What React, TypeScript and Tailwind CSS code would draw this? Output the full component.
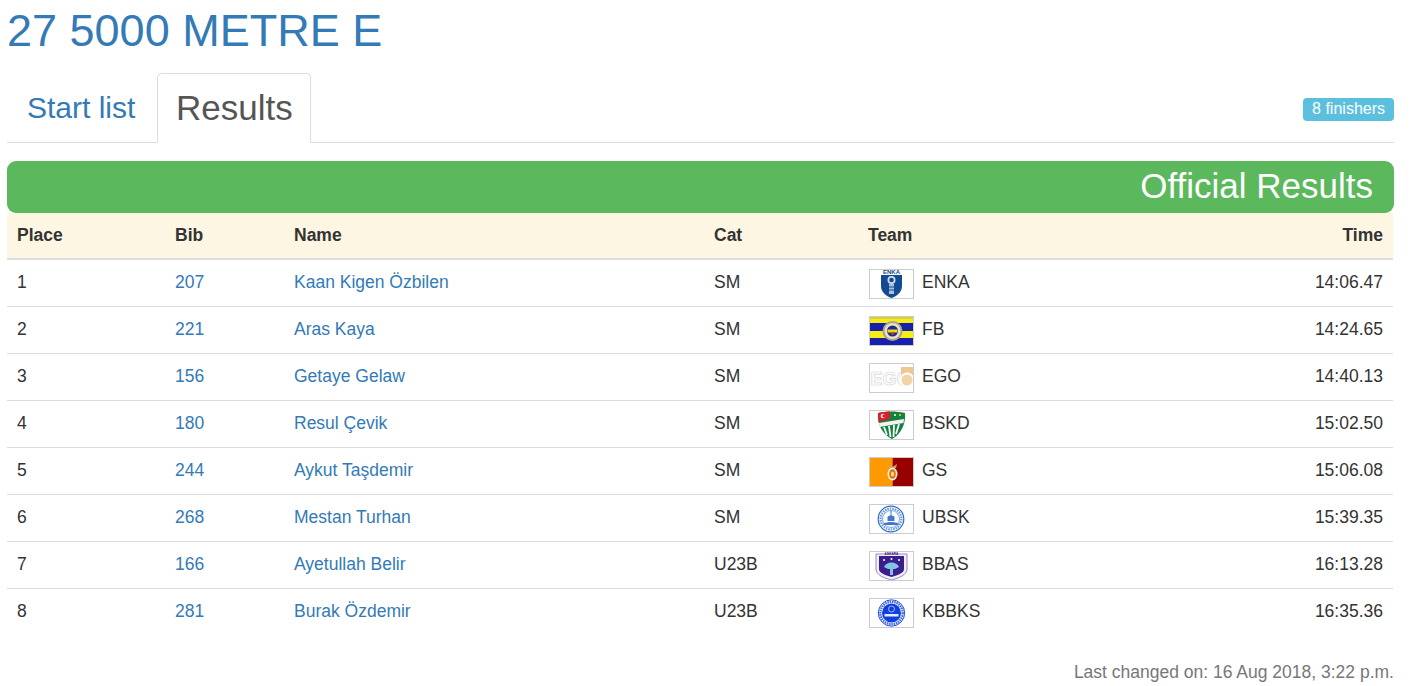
import React from 'react';

const Enka = () => (
  <svg viewBox="0 0 43 28" className="block w-full h-full">
    <rect width="43" height="28" fill="#fff" />
    <text x="21.500" y="4.200" textAnchor="middle" fontSize="6" fontWeight="700" fill="#1c4a8c" fontFamily="Liberation Sans">ENKA</text>
    <path d="M11 5h21v11c0 6-5 10-10.500 12C16 26 11 22 11 16z" fill="#134a94" />
    <circle cx="21.500" cy="10" r="4" fill="#d5e0ee" />
    <circle cx="21.500" cy="10" r="2.300" fill="#134a94" />
    <rect x="19" y="14" width="5" height="10" fill="#a9bfdb" />
    <path d="M19 17h5M19 20h5" stroke="#134a94" strokeWidth="1" />
  </svg>
);

const Fb = () => (
  <svg viewBox="0 0 43 28" className="block w-full h-full">
    <rect width="43" height="28" fill="#f7ec13" />
    <rect y="6" width="43" height="8" fill="#1620a8" />
    <rect y="21" width="43" height="7" fill="#1620a8" />
    <rect y="0" width="43" height="2" fill="#d8cf3a" />
    <circle cx="22.500" cy="14" r="10" fill="#a8a490" />
    <circle cx="22.500" cy="14" r="8" fill="#e8e2c8" />
    <circle cx="22.500" cy="14" r="5.500" fill="#1a2b8c" />
    <path d="M17.500 12.500h10v3h-10z" fill="#f2d90e" />
    <circle cx="22.500" cy="16.500" r="1.600" fill="#c63a22" />
  </svg>
);

const Ego = () => (
  <svg viewBox="0 0 43 28" className="block w-full h-full">
    <rect width="43" height="28" fill="#fff" />
    <text x="0.500" y="21" fontSize="18" fontWeight="700" fill="#fff" stroke="#d6d6d6" strokeWidth="0.700" fontFamily="Liberation Sans">EGO</text>
    <path d="M31 3h12v9h-12z" fill="#eec795" />
    <circle cx="37" cy="16" r="6.500" fill="#f2d3a6" stroke="#fff" strokeWidth="2" />
  </svg>
);

const Bskd = () => (
  <svg viewBox="0 0 43 28" className="block w-full h-full">
    <rect width="43" height="28" fill="#fff" />
    <path d="M8 2c8-2 18-2 27 0 1 11-4 21-13 26C12 23 7 13 8 2z" fill="#14813f" />
    <path d="M8 2c4-1 8-1.500 12-1.500V8L8.500 11z" fill="#d81f2a" />
    <path d="M9 12l25-4-.5 4-24 4z" fill="#f3f3f3" />
    <path d="M14 16l3 8M19 15l1.500 11M24 14l-.5 12M29 13l-3 10" stroke="#fff" strokeWidth="1.800" />
    <circle cx="13" cy="5" r="2.300" fill="#fff" />
    <circle cx="14" cy="5" r="1.800" fill="#d81f2a" />
    <circle cx="25" cy="4" r="1" fill="#fff" />
    <circle cx="30" cy="4" r="1" fill="#f2d90e" />
  </svg>
);

const Gs = () => (
  <svg viewBox="0 0 43 28" className="block w-full h-full">
    <rect width="22.500" height="28" fill="#fd9a00" />
    <rect x="22.500" width="20.500" height="28" fill="#990000" />
    <path d="M18 6l4.500 3 4.500-3-1 4h-7z" fill="#c9a65a" />
    <ellipse cx="22.500" cy="16" rx="5" ry="6.500" fill="#f6f2e4" />
    <ellipse cx="22.500" cy="16" rx="3.300" ry="4.800" fill="#e0730f" />
    <ellipse cx="22.500" cy="16" rx="1.500" ry="2.500" fill="#f6df9a" />
  </svg>
);

const Ubsk = () => (
  <svg viewBox="0 0 43 28" className="block w-full h-full">
    <rect width="43" height="28" fill="#fff" />
    <circle cx="21" cy="14" r="12.800" fill="#fff" stroke="#2f6fc4" strokeWidth="1.200" />
    <circle cx="21" cy="14" r="10.400" fill="none" stroke="#6f9ada" strokeWidth="2.400" strokeDasharray="1.500 1" />
    <circle cx="21" cy="14" r="8.500" fill="#fff" stroke="#2f6fc4" strokeWidth="0.600" />
    <path d="M20.500 5.500h1v5h-1zM17.500 12c1-2 6-2 7 0v4h-7zM13.500 18.500c4-2 11-2 15 0v1.500h-15z" fill="#3d7ad0" />
  </svg>
);

const Bbas = () => (
  <svg viewBox="0 0 43 28" className="block w-full h-full">
    <rect width="43" height="28" fill="#fff" />
    <path d="M6 2h31v15c0 6-8 9-15.500 11C14 26 6 23 6 17z" fill="#f3effa" stroke="#9a86c0" strokeWidth="1" />
    <text x="21.500" y="2.600" textAnchor="middle" fontSize="3.200" fontWeight="700" fill="#3a2080" fontFamily="Liberation Sans">ANKARA</text>
    <path d="M9 4h25v13c0 4-6 6-12.500 8C15 23 9 21 9 17z" fill="#3c1d8c" />
    <path d="M14 15c2-6 13-6 15 0l-4 2h-2v6h-3v-6h-2z" fill="#7fc4e2" />
    <circle cx="14" cy="8" r="1" fill="#fff" />
    <circle cx="21.500" cy="7" r="1" fill="#fff" />
    <circle cx="29" cy="8" r="1" fill="#fff" />
  </svg>
);

const Kbbks = () => (
  <svg viewBox="0 0 43 28" className="block w-full h-full">
    <rect width="43" height="28" fill="#fff" />
    <circle cx="21.500" cy="14" r="13.200" fill="#fff" stroke="#1d4fd8" strokeWidth="1" />
    <circle cx="21.500" cy="14" r="11.200" fill="none" stroke="#3f6ae4" strokeWidth="2.400" strokeDasharray="1.500 0.800" />
    <circle cx="21.500" cy="14" r="9.500" fill="#0f3fe0" />
    <circle cx="21.500" cy="10" r="3" fill="none" stroke="#c8d6ff" strokeWidth="0.800" />
    <rect x="14.500" y="15" width="14" height="2.500" fill="#e6ecff" />
  </svg>
);

const rows = [
  { place: 1, bib: 207, name: 'Kaan Kigen Özbilen', cat: 'SM', team: 'ENKA', Logo: Enka, time: '14:06.47' },
  { place: 2, bib: 221, name: 'Aras Kaya', cat: 'SM', team: 'FB', Logo: Fb, time: '14:24.65' },
  { place: 3, bib: 156, name: 'Getaye Gelaw', cat: 'SM', team: 'EGO', Logo: Ego, time: '14:40.13' },
  { place: 4, bib: 180, name: 'Resul Çevik', cat: 'SM', team: 'BSKD', Logo: Bskd, time: '15:02.50' },
  { place: 5, bib: 244, name: 'Aykut Taşdemir', cat: 'SM', team: 'GS', Logo: Gs, time: '15:06.08' },
  { place: 6, bib: 268, name: 'Mestan Turhan', cat: 'SM', team: 'UBSK', Logo: Ubsk, time: '15:39.35' },
  { place: 7, bib: 166, name: 'Ayetullah Belir', cat: 'U23B', team: 'BBAS', Logo: Bbas, time: '16:13.28' },
  { place: 8, bib: 281, name: 'Burak Özdemir', cat: 'U23B', team: 'KBBKS', Logo: Kbbks, time: '16:35.36' },
];

export default function App() {
  return (
    <div className="h-[686px] overflow-hidden bg-white pl-[7px] pr-5 font-['Liberation_Sans',Arial,sans-serif] text-[17.5px] leading-[25px] text-[#333]">
      <h1 className="pt-[6px] text-[45px] leading-[50px] text-[#337ab7]">27 5000 METRE E</h1>

      {/* Tabs */}
      <div className="mt-[17px] flex h-[70px] items-stretch border-b border-[#ddd]">
        <a className="mr-[3px] flex h-[70px] w-[147px] items-center whitespace-nowrap px-5 pb-[2px] text-[30px] text-[#337ab7]">Start list</a>
        <a className="flex h-[70px] w-[154px] items-center rounded-t-[5px] border border-b-white border-[#ddd] bg-white px-[18px] pb-[1px] text-[35px] text-[#555]">Results</a>
        <div className="ml-auto pt-[25px]">
          <span className="block h-[23px] rounded-[4px] bg-[#5bc0de] px-[9px] text-[16px] leading-[22px] text-white">8 finishers</span>
        </div>
      </div>

      <div className="mt-[18px] flex h-[52px] items-center justify-end rounded-[9px] bg-[#5cb85c] pr-[21px] pb-[3px] text-[35px] text-white">Official Results</div>

      <table className="w-[1386px] table-fixed border-collapse">
        <colgroup>
          <col className="w-[158px]" />
          <col className="w-[119px]" />
          <col className="w-[420px]" />
          <col className="w-[154px]" />
          <col />
          <col className="w-[150px]" />
        </colgroup>
        <thead>
          <tr className="h-[46px] border-b-2 border-[#ddd] bg-[#fcf6e3] text-left font-bold">
            <th className="px-[10px]">Place</th>
            <th className="px-[10px]">Bib</th>
            <th className="px-[10px]">Name</th>
            <th className="px-[10px]">Cat</th>
            <th className="px-[10px]">Team</th>
            <th className="px-[10px] text-right">Time</th>
          </tr>
        </thead>
        <tbody>
          {rows.map(({ Logo, ...r }) => (
            <tr key={r.place} className="h-[47px] border-t border-[#ddd] first:border-t-0">
              <td className="px-[10px]">{r.place}</td>
              <td className="px-[10px] text-[#337ab7]">{r.bib}</td>
              <td className="px-[10px] text-[#337ab7]">{r.name}</td>
              <td className="px-[10px]">{r.cat}</td>
              <td className="px-[10px]">
                <div className="flex items-center gap-2">
                  <span className="ml-px mt-[2px] block h-[30px] w-[45px] border border-[#ccc] bg-white">
                    <Logo />
                  </span>
                  <span>{r.team}</span>
                </div>
              </td>
              <td className="px-[10px] text-right">{r.time}</td>
            </tr>
          ))}
        </tbody>
      </table>

      <p className="mt-[25px] text-right text-[17.5px] text-[#777]">Last changed on: 16 Aug 2018, 3:22 p.m.</p>
    </div>
  );
}
